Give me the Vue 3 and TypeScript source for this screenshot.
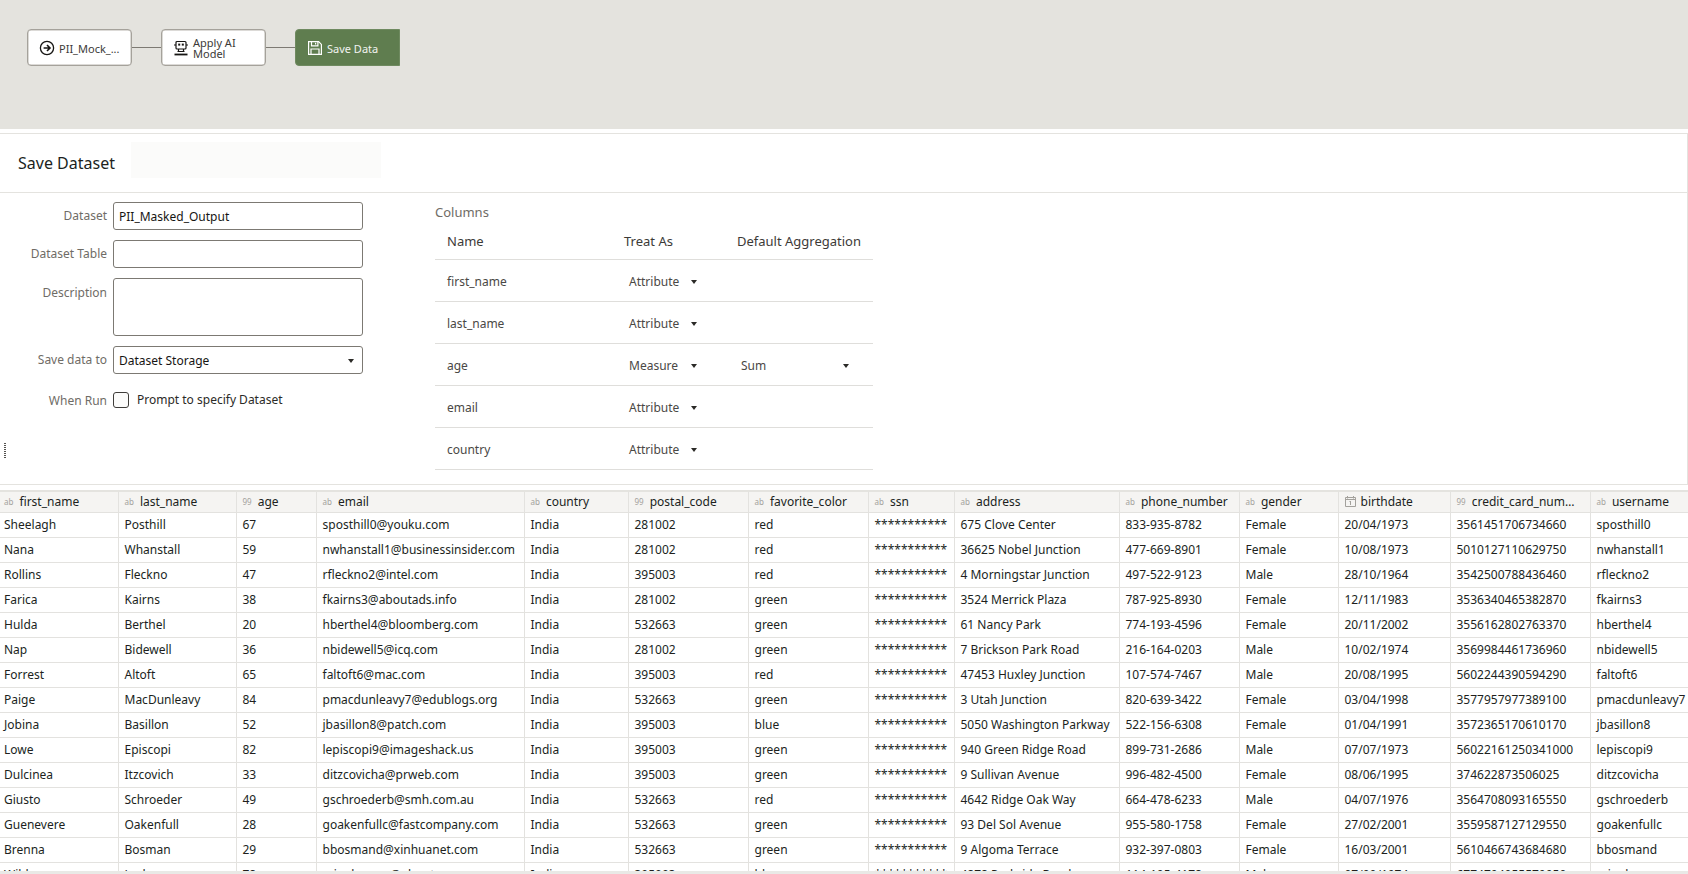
<script setup lang="ts">
interface Col { name: string; type: 'ab' | '99' | 'cal'; width: number }
const cols: Col[] = [
  { name: 'first_name', type: 'ab', width: 118 },
  { name: 'last_name', type: 'ab', width: 118 },
  { name: 'age', type: '99', width: 80 },
  { name: 'email', type: 'ab', width: 208 },
  { name: 'country', type: 'ab', width: 104 },
  { name: 'postal_code', type: '99', width: 120 },
  { name: 'favorite_color', type: 'ab', width: 120 },
  { name: 'ssn', type: 'ab', width: 86 },
  { name: 'address', type: 'ab', width: 165 },
  { name: 'phone_number', type: 'ab', width: 120 },
  { name: 'gender', type: 'ab', width: 99 },
  { name: 'birthdate', type: 'cal', width: 112 },
  { name: 'credit_card_number', type: '99', width: 140 },
  { name: 'username', type: 'ab', width: 98 },
]
const S = '***********'
const rows: string[][] = [
  ['Sheelagh','Posthill','67','sposthill0@youku.com','India','281002','red',S,'675 Clove Center','833-935-8782','Female','20/04/1973','3561451706734660','sposthill0'],
  ['Nana','Whanstall','59','nwhanstall1@businessinsider.com','India','281002','red',S,'36625 Nobel Junction','477-669-8901','Female','10/08/1973','5010127110629750','nwhanstall1'],
  ['Rollins','Fleckno','47','rfleckno2@intel.com','India','395003','red',S,'4 Morningstar Junction','497-522-9123','Male','28/10/1964','3542500788436460','rfleckno2'],
  ['Farica','Kairns','38','fkairns3@aboutads.info','India','281002','green',S,'3524 Merrick Plaza','787-925-8930','Female','12/11/1983','3536340465382870','fkairns3'],
  ['Hulda','Berthel','20','hberthel4@bloomberg.com','India','532663','green',S,'61 Nancy Park','774-193-4596','Female','20/11/2002','3556162802763370','hberthel4'],
  ['Nap','Bidewell','36','nbidewell5@icq.com','India','281002','green',S,'7 Brickson Park Road','216-164-0203','Male','10/02/1974','3569984461736960','nbidewell5'],
  ['Forrest','Altoft','65','faltoft6@mac.com','India','395003','red',S,'47453 Huxley Junction','107-574-7467','Male','20/08/1995','5602244390594290','faltoft6'],
  ['Paige','MacDunleavy','84','pmacdunleavy7@edublogs.org','India','532663','green',S,'3 Utah Junction','820-639-3422','Female','03/04/1998','3577957977389100','pmacdunleavy7'],
  ['Jobina','Basillon','52','jbasillon8@patch.com','India','395003','blue',S,'5050 Washington Parkway','522-156-6308','Female','01/04/1991','3572365170610170','jbasillon8'],
  ['Lowe','Episcopi','82','lepiscopi9@imageshack.us','India','395003','green',S,'940 Green Ridge Road','899-731-2686','Male','07/07/1973','56022161250341000','lepiscopi9'],
  ['Dulcinea','Itzcovich','33','ditzcovicha@prweb.com','India','395003','green',S,'9 Sullivan Avenue','996-482-4500','Female','08/06/1995','374622873506025','ditzcovicha'],
  ['Giusto','Schroeder','49','gschroederb@smh.com.au','India','532663','red',S,'4642 Ridge Oak Way','664-478-6233','Male','04/07/1976','3564708093165550','gschroederb'],
  ['Guenevere','Oakenfull','28','goakenfullc@fastcompany.com','India','532663','green',S,'93 Del Sol Avenue','955-580-1758','Female','27/02/2001','3559587127129550','goakenfullc'],
  ['Brenna','Bosman','29','bbosmand@xinhuanet.com','India','532663','green',S,'9 Algoma Terrace','932-397-0803','Female','16/03/2001','5610466743684680','bbosmand'],
  ['Wilda','Ludwe','78','mjoohamsn@ubuntu.com','India','395003','blue',S,'4878 Parkside Road','114-105-4178','Male','07/09/1974','6774794955579950','mjoohams'],
]
const columnRows = [
  { name: 'first_name', treat: 'Attribute', agg: '' },
  { name: 'last_name', treat: 'Attribute', agg: '' },
  { name: 'age', treat: 'Measure', agg: 'Sum' },
  { name: 'email', treat: 'Attribute', agg: '' },
  { name: 'country', treat: 'Attribute', agg: '' },
]
</script>

<template>
  <div class="page">
    <section class="canvas">
      <div class="node">
        <svg class="nicon" width="16" height="16" viewBox="0 0 16 16" fill="none" stroke="#161513" stroke-width="1.3">
          <circle cx="8" cy="8" r="6.6" />
          <path d="M4.6 8h6.2M8 5l3 3-3 3" stroke-width="1.6" />
        </svg>
        <span class="ntext">PII_Mock_...</span>
      </div>
      <div class="link"></div>
      <div class="node">
        <svg class="nicon" width="16" height="16" viewBox="0 0 16 16" fill="none" stroke="#161513" stroke-width="1.2">
          <rect x="3" y="1.5" width="10" height="7.5" rx="1" />
          <rect x="5.2" y="3.6" width="2" height="2" fill="#161513" stroke="none" />
          <rect x="8.8" y="3.6" width="2" height="2" fill="#161513" stroke="none" />
          <path d="M1 5h2M13 5h2M5.5 9v2.5M10.5 9v2.5M4.5 11.5h7" />
          <path d="M1.5 14.5h13" stroke-width="1.8" />
        </svg>
        <span class="ntext two">Apply AI<br />Model</span>
      </div>
      <div class="link"></div>
      <div class="node active">
        <svg class="nicon" width="16" height="16" viewBox="0 0 16 16" fill="none" stroke="#ffffff" stroke-width="1.2">
          <path d="M1.6 1.6h10l2.8 2.8v10H1.6z" />
          <path d="M4.5 1.6v4.2h6.4V1.6M8.6 2.8v1.8M4 14.4V9h8v5.4" />
        </svg>
        <span class="ntext">Save Data</span>
      </div>
    </section>

    <section class="panel">
      <header class="panel-head">
        <h1>Save Dataset</h1>
        <div class="placeholder"></div>
      </header>
      <div class="panel-body">
        <span class="grip"></span>
        <form class="form" @submit.prevent>
          <label class="flabel">Dataset</label>
          <div class="input">PII_Masked_Output</div>
          <label class="flabel">Dataset Table</label>
          <div class="input"></div>
          <label class="flabel top">Description</label>
          <div class="input area"></div>
          <label class="flabel">Save data to</label>
          <div class="input select">Dataset Storage<i class="caret"></i></div>
          <label class="flabel run">When Run</label>
          <div class="check"><span class="box"></span>Prompt to specify Dataset</div>
        </form>
        <div class="columns">
          <div class="ctitle">Columns</div>
          <div class="crow chead">
            <span class="c1">Name</span><span class="c2">Treat As</span><span class="c3">Default Aggregation</span>
          </div>
          <div v-for="r in columnRows" :key="r.name" class="crow">
            <span class="c1 val">{{ r.name }}</span>
            <span class="c2 val sel">{{ r.treat }}<i class="caret"></i></span>
            <span v-if="r.agg" class="c3 val sel wide">{{ r.agg }}<i class="caret"></i></span>
          </div>
        </div>
      </div>
    </section>

    <section class="grid-wrap">
      <table class="grid">
        <colgroup>
          <col v-for="c in cols" :key="c.name" :style="{ width: c.width + 'px' }" />
        </colgroup>
        <thead>
          <tr>
            <th v-for="c in cols" :key="c.name">
              <svg v-if="c.type === 'cal'" class="cal" width="11" height="11" viewBox="0 0 11 11" fill="none" stroke="#a3a19c" stroke-width="1">
                <path d="M.5 1.5h10v9H.5zM.5 3.5h10M2.5 0v2.5M8.5 0v2.5M5.5 5v4M4.5 6l1-1" />
              </svg>
              <span v-else class="ticon">{{ c.type }}</span><span class="tname">{{ c.name }}</span>
            </th>
          </tr>
        </thead>
        <tbody>
          <tr v-for="(r, i) in rows" :key="i">
            <td v-for="(v, j) in r" :key="j">{{ v }}</td>
          </tr>
        </tbody>
      </table>
    </section>
    <div class="foot"></div>
  </div>
</template>

<style scoped>
.page {
  width: 1688px;
  height: 874px;
  overflow: hidden;
  display: flex;
  flex-direction: column;
  background: #fff;
  font-family: "Noto Sans", "Open Sans", sans-serif;
  font-size: 13px;
  color: #161513;
}
.canvas {
  height: 129px;
  flex: none;
  box-sizing: border-box;
  padding: 29px 0 0 27px;
  background: #e4e3de;
  display: flex;
  align-items: flex-start;
}
.node {
  width: 105px;
  height: 37px;
  box-sizing: border-box;
  background: #fff;
  border: 1px solid #a5a29b;
  box-shadow: inset 0 0 0 .5px #b9b6af;
  border-radius: 4px;
  display: flex;
  align-items: center;
  padding-left: 11px;
  gap: 4px;
  flex: none;
}
.node.active {
  background: #5f7d4f;
  border-color: #6f8a60;
  box-shadow: none;
  border-radius: 4px 0 0 4px;
  color: #fff;
}
.nicon { flex: none; }
.ntext {
  font-size: 11px;
  padding-top: 1px;
  color: #3c3a37;
  white-space: nowrap;
}
.active .ntext { color: #f2f3ef; }
.ntext.two { line-height: 11px; padding-top: 0; }
.link {
  width: 29px;
  height: 1px;
  margin-top: 18px;
  background: #7d7a73;
  flex: none;
}
.panel {
  flex: none;
  height: 352px;
  margin-top: 4px;
  box-sizing: border-box;
  border-top: 1px solid #e4e3df;
  border-bottom: 1px solid #e4e3df;
  border-right: 1px solid #e4e3df;
  display: flex;
  flex-direction: column;
}
.panel-head {
  height: 59px;
  flex: none;
  box-sizing: border-box;
  border-bottom: 1px solid #e4e3df;
  display: flex;
  align-items: center;
  padding-left: 18px;
}
.panel-head h1 {
  margin: 0;
  width: 113px;
  font-size: 16px;
  font-weight: 400;
  color: #201f1d;
}
.placeholder {
  width: 250px;
  height: 36px;
  margin-top: -7px;
  background: #fbfbfa;
}
.panel-body {
  flex: 1;
  display: flex;
  position: relative;
}
.grip {
  position: absolute;
  left: 4px;
  top: 250px;
  height: 15px;
  width: 2px;
  background: repeating-linear-gradient(to bottom, #55534f 0 1px, transparent 1px 2px);
}
.form {
  width: 435px;
  flex: none;
  box-sizing: border-box;
  padding-top: 9px;
  display: grid;
  grid-template-columns: 107px 250px;
  column-gap: 6px;
  row-gap: 10px;
  align-content: start;
}
.flabel {
  height: 28px;
  text-align: right;
  color: #6f6c66;
  font-size: 12px;
  line-height: 28px;
}
.flabel.top { line-height: 30px; }
.flabel.run { height: 16px; margin-top: 8px; line-height: 17px; }
.input {
  height: 28px;
  box-sizing: border-box;
  border: 1px solid #7c7973;
  border-radius: 3px;
  padding: 0 5px;
  line-height: 27px;
  font-size: 12px;
  color: #161513;
  position: relative;
}
.input.area { height: 58px; }
.check {
  display: flex;
  align-items: center;
  gap: 8px;
  height: 16px;
  line-height: 18px;
  margin-top: 8px;
  font-size: 12px;
  color: #2b2a27;
}
.box {
  width: 16px;
  height: 16px;
  box-sizing: border-box;
  border: 1px solid #3f3d3a;
  border-radius: 3px;
  background: #fcfcfb;
}
.caret {
  position: absolute;
  width: 0;
  height: 0;
  border-left: 3.5px solid transparent;
  border-right: 3.5px solid transparent;
  border-top: 4px solid #2b2a27;
}
.select .caret { right: 8px; top: 12px; }
.columns {
  width: 438px;
  flex: none;
  padding-top: 10px;
}
.ctitle {
  font-size: 13px;
  line-height: 18px;
  color: #6f6c66;
}
.crow {
  height: 42px;
  box-sizing: border-box;
  border-bottom: 1px solid #dfdedb;
  position: relative;
  font-size: 12px;
  line-height: 43px;
}
.crow span { position: absolute; top: 0; white-space: nowrap; }
.chead {
  height: 39px;
  color: #3c3a37;
  line-height: 40px;
  font-size: 13px;
}
.chead .c1 { left: 12px; }
.chead .c2 { left: 189px; }
.chead .c3 { left: 302px; }
.val { color: #4a4845; }
.c1 { left: 12px; }
.c2 { left: 194px; }
.c3 { left: 306px; }
.sel { width: 68px; }
.sel.wide { width: 108px; }
.sel .caret { right: 0; top: 20px; }
.grid-wrap {
  flex: 1;
  min-height: 0;
  margin-top: 5px;
  overflow: hidden;
  border-top: 2px solid #e4e3df;
}
.grid {
  table-layout: fixed;
  width: 1688px;
  border-collapse: collapse;
}
.grid th,
.grid td {
  box-sizing: border-box;
  border-right: 1px solid #e3e2df;
  border-bottom: 1px solid #e3e2df;
  height: 25px;
  padding: 0 0 0 6px;
  white-space: nowrap;
  overflow: hidden;
  text-align: left;
  font-weight: 400;
  font-size: 12px;
  line-height: 20px;
  color: #201f1d;
}
.grid th:first-child,
.grid td:first-child { padding-left: 4px; }
.grid td:last-child { border-right: 0; }
.grid th:last-child { border-right: 0; padding-right: 0; }
.grid th {
  height: 20px;
  padding-right: 10px;
  background: #f5f4f2;
  text-overflow: ellipsis;
}
.ticon {
  font-size: 8px;
  color: #a3a19c;
  margin-right: 6px;
  vertical-align: 1px;
}
.cal { margin-right: 5px; vertical-align: -1px; }
.foot {
  height: 3px;
  flex: none;
  background: #e9e9e6;
}
</style>
